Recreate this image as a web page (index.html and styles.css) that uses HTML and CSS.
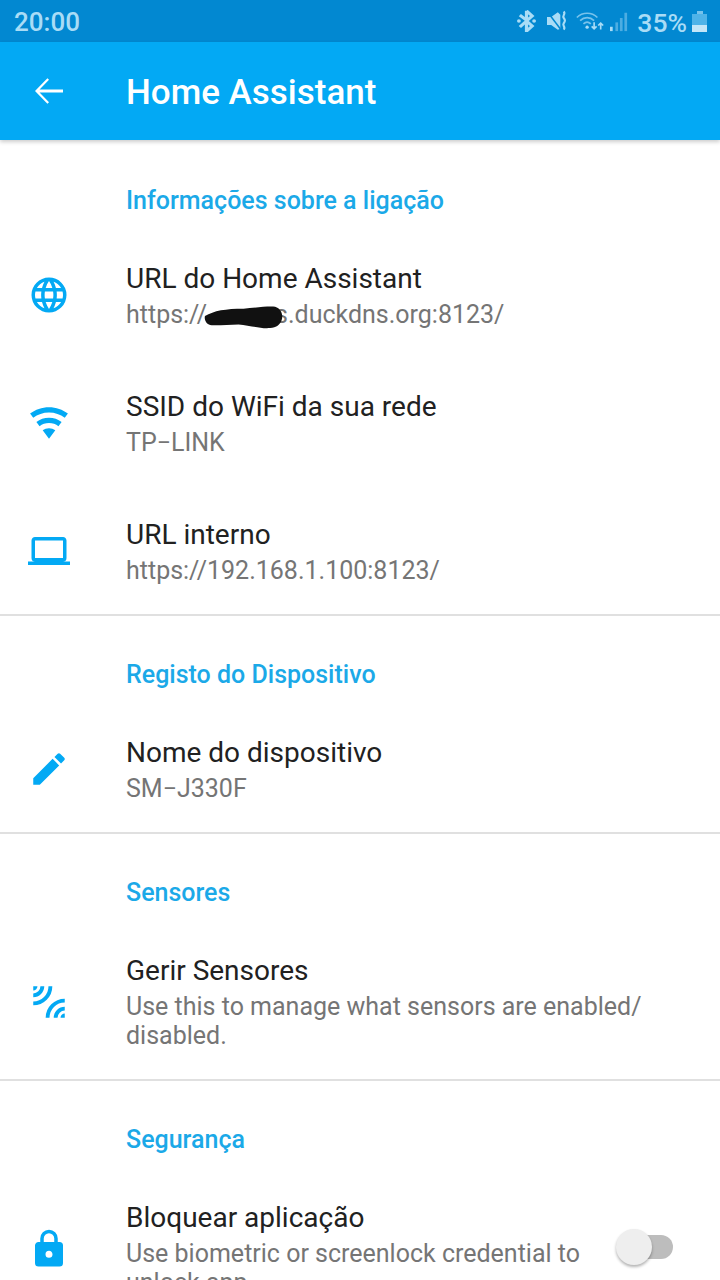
FILE: index.html
```html
<!DOCTYPE html>
<html lang="pt">
<head>
    <meta charset="UTF-8">
    <meta name="viewport" content="width=device-width, initial-scale=1.0">
    <title>Home Assistant</title>
    <link rel="stylesheet" href="styles.css">
</head>
<body>
    <div class="status-bar">
        <span class="status-time">20:00</span>
        <div class="status-icons">
            <svg class="status-icon icon-bt" width="19" height="22" viewBox="0 0 20 26" preserveAspectRatio="none"><path d="M10 1v11L3 6M10 13L3 20M10 13V25l6-6-6-6 6-6-6-6" fill="none" stroke="currentColor" stroke-width="3.4"/><circle cx="2" cy="13" r="2" fill="currentColor"/><circle cx="18" cy="13" r="2" fill="currentColor"/></svg>
            <svg class="status-icon icon-mute" width="20" height="22" viewBox="0 0 24 28" preserveAspectRatio="none"><path d="M0 9h5l8-6 3 3v18l-3 1-8-6H0z" fill="currentColor"/><path d="M1 3l15 21" stroke="#0288d1" stroke-width="2"/><path d="M20 2c3 3-2 5 0 8s2 4 0 7 3 5 0 8" fill="none" stroke="currentColor" stroke-width="2.6"/></svg>
            <svg class="status-icon icon-wifi" width="28" height="21" viewBox="0 0 34 26" preserveAspectRatio="none"><path d="M1 8c7-7 18-7 25 0M5 12c5-5 12-5 17 0M9 16c3-3 6-3 9 0" fill="none" stroke="currentColor" stroke-width="2" opacity=".7"/><circle cx="13.5" cy="20" r="2" fill="currentColor"/><path d="M22 14v7M19 19l3 3 3-3M30 23v-7M27 18l3-3 3 3" fill="none" stroke="currentColor" stroke-width="2"/></svg>
            <svg class="status-icon icon-signal" width="18" height="21" viewBox="0 0 20 24" preserveAspectRatio="none"><rect x="0" y="18" width="3" height="5" fill="currentColor"/><rect x="6" y="13" width="3" height="10" fill="currentColor" opacity=".45"/><rect x="11" y="8" width="3" height="15" fill="currentColor" opacity=".45"/><rect x="16" y="2" width="3" height="21" fill="currentColor" opacity=".45"/></svg>
            <span class="status-battery-text">35%</span>
            <div class="battery"><div class="battery-cap"></div><div class="battery-body"><div class="battery-level"></div></div></div>
        </div>
    </div>

    <header class="app-bar">
        <svg class="app-bar-back" width="42" height="42" viewBox="0 0 24 24"><path d="M20 11.2H6.6l5.4-5.6L11.1 4.7 4 12l7.1 7.3.9-.9-5.4-5.6H20z"/></svg>
        <h1>Home Assistant</h1>
    </header>

    <main class="settings">
        <section class="group">
            <h2>Informações sobre a ligação</h2>
            <div class="row">
                <svg class="row-icon" viewBox="0 0 24 24"><path d="M16.36,14C16.44,13.34 16.5,12.68 16.5,12C16.5,11.32 16.44,10.66 16.36,10H19.74C19.9,10.64 20,11.31 20,12C20,12.69 19.9,13.36 19.74,14M14.59,19.56C15.19,18.45 15.65,17.25 15.97,16H18.92C17.96,17.65 16.43,18.93 14.59,19.56M14.34,14H9.66C9.56,13.34 9.5,12.68 9.5,12C9.5,11.32 9.56,10.65 9.66,10H14.34C14.43,10.65 14.5,11.32 14.5,12C14.5,12.68 14.43,13.34 14.34,14M12,19.96C11.17,18.76 10.5,17.43 10.09,16H13.91C13.5,17.43 12.83,18.76 12,19.96M8,8H5.08C6.03,6.34 7.57,5.06 9.4,4.44C8.8,5.55 8.35,6.75 8,8M5.08,16H8C8.35,17.25 8.8,18.45 9.4,19.56C7.57,18.93 6.03,17.65 5.08,16M4.26,14C4.1,13.36 4,12.69 4,12C4,11.31 4.1,10.64 4.26,10H7.64C7.56,10.66 7.5,11.32 7.5,12C7.5,12.68 7.56,13.34 7.64,14M12,4.03C12.83,5.23 13.5,6.57 13.91,8H10.09C10.5,6.57 11.17,5.23 12,4.03M18.92,8H15.97C15.65,6.75 15.19,5.55 14.59,4.44C16.43,5.07 17.96,6.34 18.92,8M12,2C6.47,2 2,6.5 2,12A10,10 0 0,0 12,22A10,10 0 0,0 22,12A10,10 0 0,0 12,2Z"/></svg>
                <div class="row-text">
                    <div class="row-title">URL do Home Assistant</div>
                    <div class="row-summary">https://<svg class="scribble" viewBox="0 0 80 26" preserveAspectRatio="none"><path d="M1 12C10 6 22 4 40 4c12-1 26-3 32-2 6 2 8 8 7 13-1 6-6 10-12 10-10 1-20-3-32-4-12 0-26 2-30 0-3-1-5-6-4-9z"/></svg>s.duckdns.org:8123/</div>
                </div>
            </div>
            <div class="row">
                <svg class="row-icon" viewBox="0 0 24 24"><path d="M12,21L15.6,16.2C14.6,15.45 13.35,15 12,15C10.65,15 9.4,15.45 8.4,16.2L12,21M12,3C7.95,3 4.21,4.34 1.2,6.6L3,9C5.5,7.12 8.62,6 12,6C15.38,6 18.5,7.12 21,9L22.8,6.6C19.79,4.34 16.05,3 12,3M12,9C9.3,9 6.81,9.89 4.8,11.4L6.6,13.8C8.1,12.67 9.97,12 12,12C14.03,12 15.9,12.67 17.4,13.8L19.2,11.4C17.19,9.89 14.7,9 12,9Z"/></svg>
                <div class="row-text">
                    <div class="row-title">SSID do WiFi da sua rede</div>
                    <div class="row-summary">TP−LINK</div>
                </div>
            </div>
            <div class="row">
                <svg class="row-icon" viewBox="0 0 24 24"><path d="M4,6H20V16H4M20,18A2,2 0 0,0 22,16V6C22,4.89 21.1,4 20,4H4C2.89,4 2,4.89 2,6V16A2,2 0 0,0 4,18H0V20H24V18H20Z"/></svg>
                <div class="row-text">
                    <div class="row-title">URL interno</div>
                    <div class="row-summary">https://192.168.1.100:8123/</div>
                </div>
            </div>
        </section>

        <section class="group">
            <h2>Registo do Dispositivo</h2>
            <div class="row">
                <svg class="row-icon" viewBox="0 0 24 24"><path d="M20.71,7.04C21.1,6.65 21.1,6 20.71,5.63L18.37,3.29C18,2.9 17.35,2.9 16.96,3.29L15.12,5.12L18.87,8.87M3,17.25V21H6.75L17.81,9.93L14.06,6.18L3,17.25Z"/></svg>
                <div class="row-text">
                    <div class="row-title">Nome do dispositivo</div>
                    <div class="row-summary">SM−J330F</div>
                </div>
            </div>
        </section>

        <section class="group">
            <h2>Sensores</h2>
            <div class="row">
                <svg class="row-icon icon-leak" viewBox="0 0 24 24"><path d="M3 3h2.4A2.4 2.4 0 0 1 3 5.4zM21 21h-2.4a2.4 2.4 0 0 1 2.4-2.4z"/><path class="leak-arc" d="M3 8.2a5.2 5.2 0 0 0 5.2-5.2M3 12.8a9.8 9.8 0 0 0 9.8-9.8M15.8 21a5.2 5.2 0 0 1 5.2-5.2M11.2 21a9.8 9.8 0 0 1 9.8-9.8"/></svg>
                <div class="row-text">
                    <div class="row-title">Gerir Sensores</div>
                    <div class="row-summary">Use this to manage what sensors are enabled/ disabled.</div>
                </div>
            </div>
        </section>

        <section class="group">
            <h2>Segurança</h2>
            <div class="row">
                <svg class="row-icon" viewBox="0 0 24 24"><path d="M12,17A2,2 0 0,0 14,15C14,13.89 13.1,13 12,13A2,2 0 0,0 10,15A2,2 0 0,0 12,17M18,8A2,2 0 0,1 20,10V20A2,2 0 0,1 18,22H6A2,2 0 0,1 4,20V10C4,8.89 4.9,8 6,8H7V6A5,5 0 0,1 12,1A5,5 0 0,1 17,6V8H18M12,3A3,3 0 0,0 9,6V8H15V6A3,3 0 0,0 12,3Z"/></svg>
                <div class="row-text">
                    <div class="row-title">Bloquear aplicação</div>
                    <div class="row-summary">Use biometric or screenlock credential to unlock app</div>
                </div>
                <div class="switch"><div class="switch-knob"></div></div>
            </div>
        </section>
    </main>
</body>
</html>
```

FILE: styles.css
```css
body {
    margin: 0;
    width: 720px;
    height: 1280px;
    overflow: hidden;
    background-color: #fff;
    font-family: Roboto, "Noto Sans", sans-serif;
}

.status-bar {
    height: 42px;
    box-sizing: border-box;
    display: flex;
    justify-content: space-between;
    align-items: center;
    padding: 2px 13px 0 14px;
    background-color: #0288d1;
    color: #a9dcf6;
}

.status-time {
    font-size: 26px;
    font-weight: 500;
}

.status-icons {
    display: flex;
    align-items: center;
}

.status-icon {
    display: block;
    margin-bottom: 2px;
}

.icon-bt {
    margin-right: 11px;
}

.icon-mute {
    margin-right: 9px;
}

.icon-wifi {
    margin-right: 6px;
}

.icon-signal {
    margin-right: 9px;
}

.status-battery-text {
    font-size: 26.5px;
    font-weight: 500;
    margin-right: 5px;
}

.battery {
    width: 15px;
    margin-bottom: 2px;
}

.battery-cap {
    width: 6px;
    height: 3px;
    margin: 0 auto;
    background-color: #a9dcf6;
    opacity: 0.7;
}

.battery-body {
    height: 18px;
    background-color: #4fb3e8;
    display: flex;
    align-items: flex-end;
}

.battery-level {
    width: 100%;
    height: 7px;
    background-color: #c4e6f8;
}

.app-bar {
    height: 98px;
    display: flex;
    align-items: center;
    padding-left: 28px;
    background-color: #03a9f4;
    box-shadow: 0 2px 4px rgba(0, 0, 0, 0.2);
    position: relative;
}

.app-bar-back {
    fill: #fff;
    margin-right: 56px;
}

.app-bar h1 {
    margin: 0;
    padding-top: 2px;
    font-size: 35px;
    font-weight: 500;
    color: #fff;
}

.settings {
    padding-top: 2px;
}

.group {
    border-bottom: 2px solid #e0e0e0;
}

.group h2 {
    margin: 0;
    height: 92px;
    padding: 43px 0 0 126px;
    box-sizing: border-box;
    font-size: 25px;
    line-height: 32px;
    font-weight: 500;
    color: #1ba9e8;
}

.row {
    display: flex;
    align-items: center;
    padding: 27px 28px 29px;
}

.row + .row {
    margin-top: 4px;
}

.row-icon {
    width: 42px;
    height: 42px;
    flex-shrink: 0;
    margin-right: 56px;
    fill: #03a9f4;
}

.leak-arc {
    fill: none;
    stroke: #03a9f4;
    stroke-width: 2.2;
}

.row-text {
    flex: 1;
}

.row-title {
    font-size: 28px;
    line-height: 36px;
    color: #212121;
}

.row-summary {
    font-size: 25px;
    line-height: 29px;
    margin-top: 3px;
    color: #757575;
}

.scribble {
    position: relative;
    width: 79px;
    height: 24px;
    margin: 0 -8px 0 -3px;
    vertical-align: -6px;
    fill: #111;
}

.switch {
    position: relative;
    width: 51px;
    height: 24px;
    margin: 0 19px 4px 30px;
    flex-shrink: 0;
    border-radius: 12px;
    background-color: #bdbdbd;
}

.switch-knob {
    position: absolute;
    left: -6px;
    top: -6px;
    width: 36px;
    height: 36px;
    border-radius: 50%;
    background-color: #eee;
    box-shadow: 0 2px 3px rgba(0, 0, 0, 0.3);
}
```
